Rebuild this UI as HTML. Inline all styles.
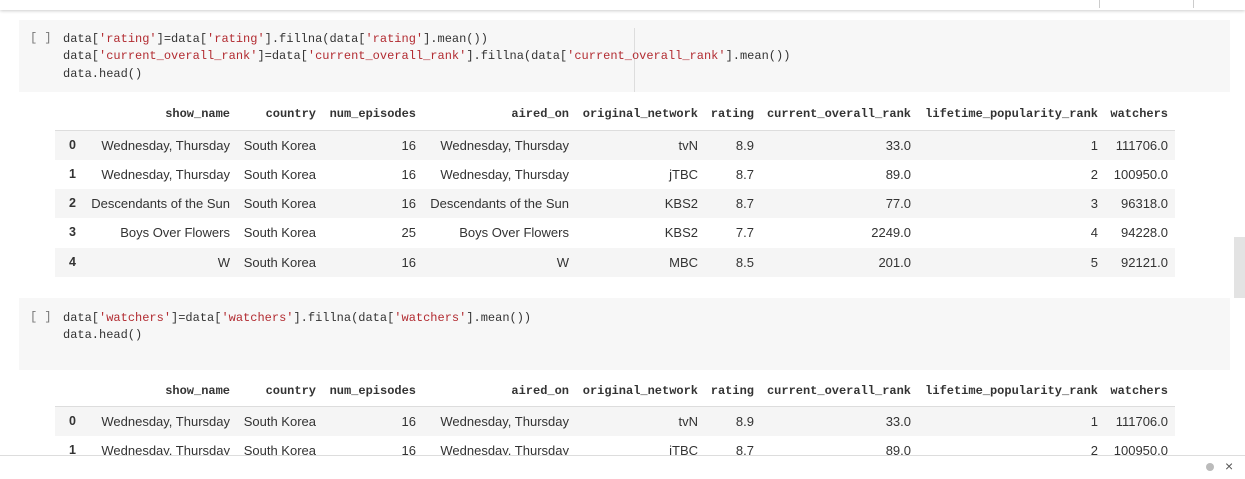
<!DOCTYPE html>
<html><head><meta charset="utf-8"><style>
body{margin:0;width:1245px;height:478px;background:#fff;position:relative;overflow:hidden;font-family:"Liberation Sans",Arial,sans-serif;}
.abs{position:absolute}
.code{position:absolute;left:19px;width:1211px;height:72px;background:#f7f7f7}
.mono{font-family:"Liberation Mono",monospace;font-size:12px;color:#333;white-space:pre}
.s{color:#b22b31}
.ln{position:absolute;left:63px;line-height:17px}
.br{position:absolute;left:30px;color:#777}
.row{position:absolute;left:55px;width:1120px;height:29px}
.g{background:#f5f5f5}
.c{position:absolute;top:0;line-height:29px;font-size:13px;color:#333;text-align:right;width:300px;white-space:nowrap}
.h{position:absolute;font-family:"Liberation Mono",monospace;font-size:12px;font-weight:bold;color:#333;text-align:right;width:300px;white-space:pre}
.i{position:absolute;left:14px;line-height:29px;font-size:12.5px;font-weight:bold;color:#333}
</style></head><body>
<div class="abs" style="left:0;top:0;width:1245px;height:10px;background:#fff;box-shadow:0 1px 3px rgba(0,0,0,.2)"></div>
<div class="abs" style="left:1099px;top:0;width:1px;height:8px;background:#ccc"></div>
<div class="abs" style="left:1193px;top:0;width:1px;height:8px;background:#ccc"></div>

<div class="code" style="top:20px"></div>
<div class="abs" style="left:634px;top:28px;width:1px;height:64px;background:#ddd"></div>
<div class="mono br" style="top:31px">[ ]</div>
<div class="mono ln" style="top:31px">data[<span class="s">'rating'</span>]=data[<span class="s">'rating'</span>].fillna(data[<span class="s">'rating'</span>].mean())</div>
<div class="mono ln" style="top:48px">data[<span class="s">'current_overall_rank'</span>]=data[<span class="s">'current_overall_rank'</span>].fillna(data[<span class="s">'current_overall_rank'</span>].mean())</div>
<div class="mono ln" style="top:66px">data.head()</div>

<div class="code" style="top:298px"></div>
<div class="mono br" style="top:310px">[ ]</div>
<div class="mono ln" style="top:310px">data[<span class="s">'watchers'</span>]=data[<span class="s">'watchers'</span>].fillna(data[<span class="s">'watchers'</span>].mean())</div>
<div class="mono ln" style="top:327px">data.head()</div>

<div class="h" style="top:107px;left:-70px">show_name</div>
<div class="h" style="top:107px;left:16px">country</div>
<div class="h" style="top:107px;left:116px">num_episodes</div>
<div class="h" style="top:107px;left:269px">aired_on</div>
<div class="h" style="top:107px;left:398px">original_network</div>
<div class="h" style="top:107px;left:454px">rating</div>
<div class="h" style="top:107px;left:611px">current_overall_rank</div>
<div class="h" style="top:107px;left:798px">lifetime_popularity_rank</div>
<div class="h" style="top:107px;left:868px">watchers</div>
<div class="abs" style="left:55px;top:130px;width:1120px;height:1px;background:#ddd"></div>

<div class="row g" style="top:131px"><span class="i">0</span><span class="c" style="left:-125px">Wednesday, Thursday</span><span class="c" style="left:-39px">South Korea</span><span class="c" style="left:61px">16</span><span class="c" style="left:214px">Wednesday, Thursday</span><span class="c" style="left:343px">tvN</span><span class="c" style="left:399px">8.9</span><span class="c" style="left:556px">33.0</span><span class="c" style="left:743px">1</span><span class="c" style="left:813px">111706.0</span></div>
<div class="row" style="top:160px"><span class="i">1</span><span class="c" style="left:-125px">Wednesday, Thursday</span><span class="c" style="left:-39px">South Korea</span><span class="c" style="left:61px">16</span><span class="c" style="left:214px">Wednesday, Thursday</span><span class="c" style="left:343px">jTBC</span><span class="c" style="left:399px">8.7</span><span class="c" style="left:556px">89.0</span><span class="c" style="left:743px">2</span><span class="c" style="left:813px">100950.0</span></div>
<div class="row g" style="top:189px"><span class="i">2</span><span class="c" style="left:-125px">Descendants of the Sun</span><span class="c" style="left:-39px">South Korea</span><span class="c" style="left:61px">16</span><span class="c" style="left:214px">Descendants of the Sun</span><span class="c" style="left:343px">KBS2</span><span class="c" style="left:399px">8.7</span><span class="c" style="left:556px">77.0</span><span class="c" style="left:743px">3</span><span class="c" style="left:813px">96318.0</span></div>
<div class="row" style="top:218px"><span class="i">3</span><span class="c" style="left:-125px">Boys Over Flowers</span><span class="c" style="left:-39px">South Korea</span><span class="c" style="left:61px">25</span><span class="c" style="left:214px">Boys Over Flowers</span><span class="c" style="left:343px">KBS2</span><span class="c" style="left:399px">7.7</span><span class="c" style="left:556px">2249.0</span><span class="c" style="left:743px">4</span><span class="c" style="left:813px">94228.0</span></div>
<div class="row g" style="top:248px"><span class="i">4</span><span class="c" style="left:-125px">W</span><span class="c" style="left:-39px">South Korea</span><span class="c" style="left:61px">16</span><span class="c" style="left:214px">W</span><span class="c" style="left:343px">MBC</span><span class="c" style="left:399px">8.5</span><span class="c" style="left:556px">201.0</span><span class="c" style="left:743px">5</span><span class="c" style="left:813px">92121.0</span></div>

<div class="h" style="top:384px;left:-70px">show_name</div>
<div class="h" style="top:384px;left:16px">country</div>
<div class="h" style="top:384px;left:116px">num_episodes</div>
<div class="h" style="top:384px;left:269px">aired_on</div>
<div class="h" style="top:384px;left:398px">original_network</div>
<div class="h" style="top:384px;left:454px">rating</div>
<div class="h" style="top:384px;left:611px">current_overall_rank</div>
<div class="h" style="top:384px;left:798px">lifetime_popularity_rank</div>
<div class="h" style="top:384px;left:868px">watchers</div>
<div class="abs" style="left:55px;top:406px;width:1120px;height:1px;background:#ddd"></div>
<div class="row g" style="top:407px"><span class="i">0</span><span class="c" style="left:-125px">Wednesday, Thursday</span><span class="c" style="left:-39px">South Korea</span><span class="c" style="left:61px">16</span><span class="c" style="left:214px">Wednesday, Thursday</span><span class="c" style="left:343px">tvN</span><span class="c" style="left:399px">8.9</span><span class="c" style="left:556px">33.0</span><span class="c" style="left:743px">1</span><span class="c" style="left:813px">111706.0</span></div>
<div class="row" style="top:436px"><span class="i">1</span><span class="c" style="left:-125px">Wednesday, Thursday</span><span class="c" style="left:-39px">South Korea</span><span class="c" style="left:61px">16</span><span class="c" style="left:214px">Wednesday, Thursday</span><span class="c" style="left:343px">jTBC</span><span class="c" style="left:399px">8.7</span><span class="c" style="left:556px">89.0</span><span class="c" style="left:743px">2</span><span class="c" style="left:813px">100950.0</span></div>

<div class="abs" style="left:1234px;top:237px;width:11px;height:61px;background:#e3e3e3"></div>

<div class="abs" style="left:0;top:455px;width:1245px;height:23px;background:#fff;border-top:1px solid #ddd"></div>
<div class="abs" style="left:1206px;top:463px;width:8px;height:8px;border-radius:50%;background:#bbb"></div>
<div class="abs" style="left:1225px;top:458px;font-size:14px;color:#555">×</div>
</body></html>
